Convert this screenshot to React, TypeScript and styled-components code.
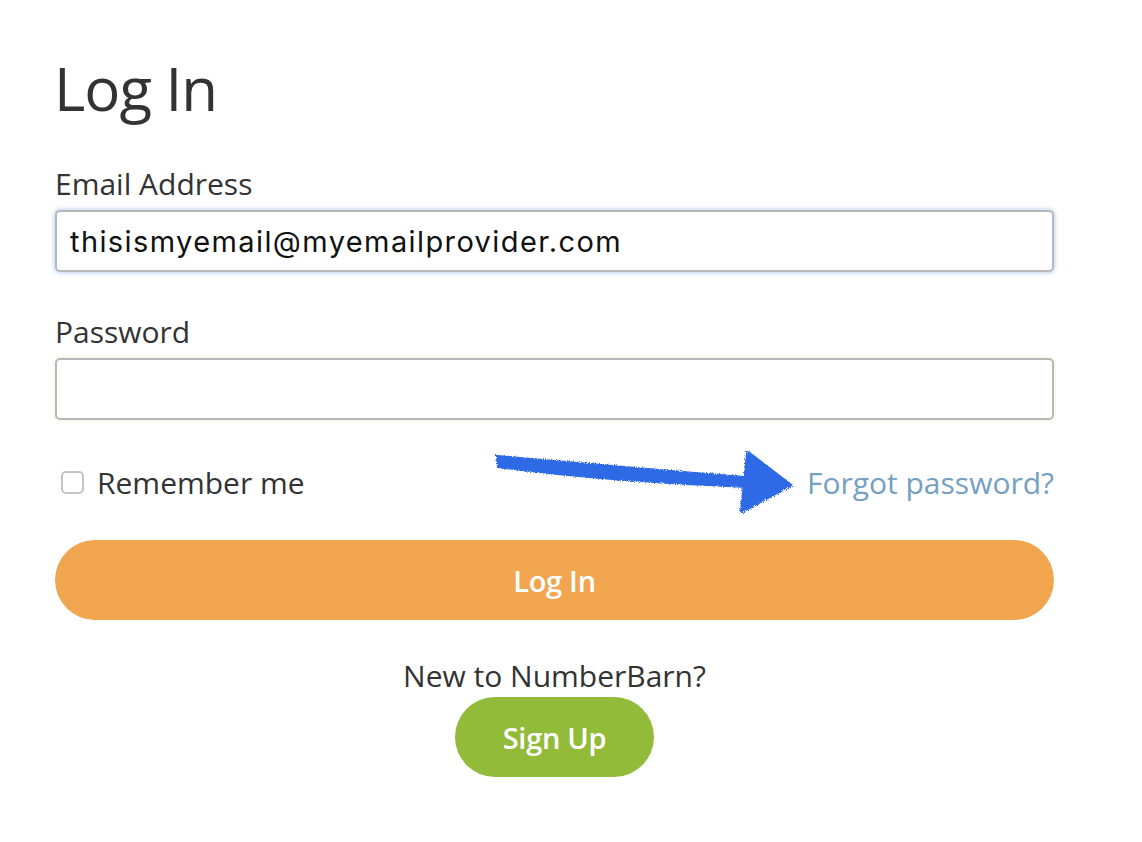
import React from "react";
import styled, { createGlobalStyle } from "styled-components";

const GlobalStyle = createGlobalStyle`
  body {
    margin: 0;
    background: #ffffff;
    font-family: "Open Sans", "Noto Sans", sans-serif;
    color: #333333;
  }
`;

const Page = styled.div`
  width: 999px;
  padding: 50px 0 0 55px;
`;

const Title = styled.h1`
  font-size: 60px;
  font-weight: 400;
  line-height: 76px;
  margin: 0 0 38px -1px;
  letter-spacing: -1px;
  color: #333333;
`;

const Field = styled.div`
  display: flex;
  flex-direction: column;
  margin-bottom: 40px;
`;

const Label = styled.label`
  font-size: 30px;
  line-height: 40px;
  margin-bottom: 6px;
`;

const Input = styled.input<{ focused?: boolean }>`
  box-sizing: border-box;
  height: 62px;
  width: 100%;
  border: 2px solid #b8b8b8;
  border-radius: 5px;
  padding: 0 13px;
  font-family: Inter, "Liberation Sans", sans-serif;
  font-size: 29px;
  letter-spacing: 1.4px;
  color: #111111;
  outline: none;
  box-shadow: ${(p) => (p.focused ? "0 0 4px 1px rgba(140, 180, 230, 0.6)" : "0 0 3px 1px rgba(240, 240, 200, 0.7)")};
`;

const OptionsRow = styled.div`
  display: flex;
  align-items: center;
  justify-content: space-between;
  height: 44px;
  position: relative;
`;

const Remember = styled.label`
  display: flex;
  align-items: center;
  gap: 13px;
  font-size: 30px;
  padding-left: 6px;
`;

const Box = styled.span`
  box-sizing: border-box;
  width: 23px;
  height: 23px;
  border: 2px solid #c4c4c4;
  border-radius: 5px;
  background: #fff;
`;

const ForgotLink = styled.a`
  font-size: 30px;
  color: #74a0c1;
  text-decoration: none;
`;

const Arrow = styled.svg`
  position: absolute;
  left: 385px;
  top: -13px;
`;

const Pill = styled.button<{ color: string; wide?: boolean }>`
  display: flex;
  align-items: center;
  justify-content: center;
  border: none;
  border-radius: 40px;
  background: ${(p) => p.color};
  color: #ffffff;
  font-family: "Open Sans", "Noto Sans", sans-serif;
  font-weight: 600;
  font-size: 29px;
  letter-spacing: -0.3px;
  height: 80px;
  width: ${(p) => (p.wide ? "100%" : "199px")};
`;

const SignUpBlock = styled.div`
  display: flex;
  flex-direction: column;
  align-items: center;
  margin-top: 36px;
`;

const NewText = styled.p`
  font-size: 30px;
  line-height: 40px;
  margin: 0 0 1px;
`;

const HandArrow: React.FC = () => (
  <Arrow width="360" height="90" viewBox="0 0 360 90">
    <defs>
      <filter id="rough">
        <feTurbulence type="fractalNoise" baseFrequency="0.9" numOctaves="2" result="n" />
        <feDisplacementMap in="SourceGraphic" in2="n" scale="4" />
      </filter>
    </defs>
    <g fill="#2f6ae6" stroke="#2f6ae6" filter="url(#rough)">
      <path d="M57 9 C120 14 200 22 305 30 L307 40 C210 36 130 30 58 20 Z" strokeWidth="2" />
      <path d="M308 6 L350 38 L302 64 Z" strokeWidth="4" strokeLinejoin="round" />
    </g>
  </Arrow>
);

const App: React.FC = () => (
  <>
    <GlobalStyle />
    <Page>
      <Title>Log In</Title>
      <Field>
        <Label>Email Address</Label>
        <Input focused defaultValue="thisismyemail@myemailprovider.com" />
      </Field>
      <Field>
        <Label>Password</Label>
        <Input type="password" />
      </Field>
      <OptionsRow>
        <Remember>
          <Box />
          Remember me
        </Remember>
        <HandArrow />
        <ForgotLink href="#">Forgot password?</ForgotLink>
      </OptionsRow>
      <Pill color="#f2a54f" wide style={{ marginTop: 36 }}>
        Log In
      </Pill>
      <SignUpBlock>
        <NewText>New to NumberBarn?</NewText>
        <Pill color="#93bb3a">Sign Up</Pill>
      </SignUpBlock>
    </Page>
  </>
);

export default App;
